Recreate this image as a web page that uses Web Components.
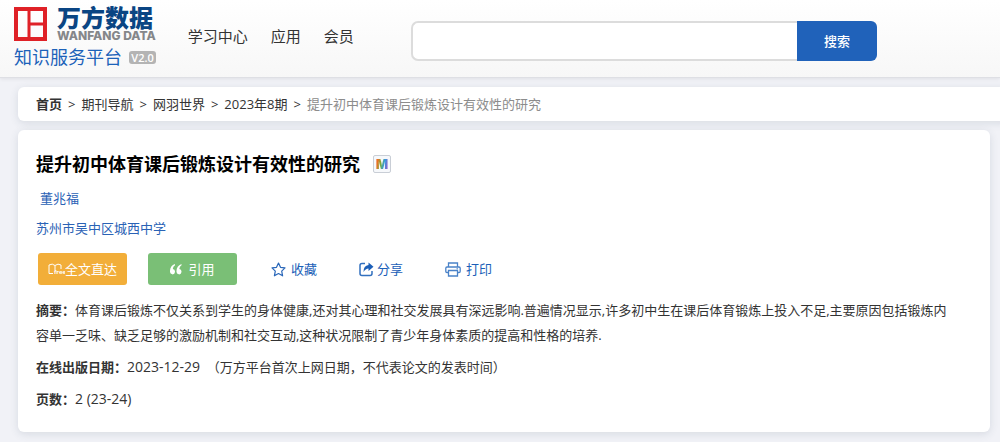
<!DOCTYPE html>
<html lang="zh-CN">
<head>
<meta charset="utf-8">
<meta name="viewport" content="width=device-width, initial-scale=1">
<title>提升初中体育课后锻炼设计有效性的研究</title>
<style>
  body {
    margin: 0;
    background: #f1f2f7;
    color: #333;
    font: 13px/20px "Open Sans", "Noto Sans CJK SC", sans-serif;
    overflow-x: hidden;
  }
  main {
    padding: 9px 10px 10px 18px;
  }
</style>
</head>
<body>
<site-header></site-header>
<main>
  <bread-crumb></bread-crumb>
  <paper-card>
    <span slot="title">提升初中体育课后锻炼设计有效性的研究</span>
    <span slot="author">董兆福</span>
    <span slot="org">苏州市吴中区城西中学</span>
    <info-row label="摘要：">体育课后锻炼不仅关系到学生的身体健康,还对其心理和社交发展具有深远影响.普遍情况显示,许多初中生在课后体育锻炼上投入不足,主要原因包括锻炼内容单一乏味、缺乏足够的激励机制和社交互动,这种状况限制了青少年身体素质的提高和性格的培养.</info-row>
    <info-row label="在线出版日期："><span slot="number">2023-12-29</span>&nbsp; （万方平台首次上网日期，不代表论文的发表时间）</info-row>
    <info-row label="页数："><span slot="number">2 (23-24)</span></info-row>
  </paper-card>
</main>

<script>
class SiteLogo extends HTMLElement {
  constructor() {
    super();
    this.attachShadow({ mode: "open" });
  }

  connectedCallback() {
    this.shadowRoot.innerHTML = `
      <style>
        :host { display: block; white-space: nowrap; }
        a { display: block; color: #1c62b9; text-decoration: none; }
        .top { display: flex; gap: 10px; align-items: center; height: 36px; }
        svg { display: block; flex: none; }
        .name {
          color: #0a4583;
          font-size: 24px;
          font-weight: 900;
          line-height: 24px;
        }
        .en {
          color: #85878a;
          font: 800 12px/12px Inter, sans-serif;
        }
        .sub {
          display: flex;
          justify-content: space-between;
          align-items: center;
          margin-top: 4px;
          font-size: 18px;
          line-height: 22px;
        }
        .version {
          padding: 0 2px;
          border-radius: 3px;
          background: #b4b4b4;
          color: #fff;
          font-size: 11px;
          font-weight: 600;
          line-height: 13px;
        }
      </style>
      <a href="#">
        <div class="top">
          <svg width="33" height="34" viewBox="0 0 33 34" fill="none" stroke="#df2127">
            <path d="M2 2h29v30H2z" stroke-width="4"/>
            <path d="M15 2v30M15 17h16" stroke-width="3"/>
          </svg>
          <div>
            <div class="name">万方数据</div>
            <div class="en">WANFANG DATA</div>
          </div>
        </div>
        <div class="sub">知识服务平台<span class="version">V2.0</span></div>
      </a>
    `;
  }
}

class SearchBox extends HTMLElement {
  constructor() {
    super();
    this.attachShadow({ mode: "open" });
  }

  connectedCallback() {
    this.shadowRoot.innerHTML = `
      <style>
        :host { display: block; }
        form { display: flex; height: 40px; }
        input {
          flex: 1;
          min-width: 0;
          box-sizing: border-box;
          padding: 0 12px;
          border: 2px solid #dcdcdc;
          border-right: 0;
          border-radius: 7px 0 0 7px;
          background: #fff;
          font: inherit;
          outline: none;
        }
        button {
          padding: 0 27px;
          border: 0;
          border-radius: 0 6px 6px 0;
          background: #2062ba;
          color: #fff;
          font: inherit;
          font-weight: 500;
          cursor: pointer;
        }
      </style>
      <form>
        <input type="text" aria-label="搜索">
        <button type="submit">搜索</button>
      </form>
    `;
    this.shadowRoot.querySelector("form").addEventListener("submit", (event) => event.preventDefault());
  }
}

class SiteHeader extends HTMLElement {
  constructor() {
    super();
    this.attachShadow({ mode: "open" });
  }

  connectedCallback() {
    this.shadowRoot.innerHTML = `
      <style>
        :host {
          display: flex;
          align-items: flex-start;
          padding: 6px 123px 7px 14px;
          border-bottom: 1px solid #dedfe4;
          background: linear-gradient(#fff, #f7f7f7);
          box-shadow: 0 1px 4px rgba(0, 0, 0, 0.08);
        }
        site-logo { flex: 0 0 141px; height: 64px; }
        nav { display: flex; gap: 23px; margin: 20px 0 0 32px; }
        nav a { color: #333; font-size: 15px; text-decoration: none; white-space: nowrap; }
        search-box { flex: 1; margin: 15px 0 0 57px; }
      </style>
      <site-logo></site-logo>
      <nav>
        <a href="#">学习中心</a>
        <a href="#">应用</a>
        <a href="#">会员</a>
      </nav>
      <search-box></search-box>
    `;
  }
}

class BreadCrumb extends HTMLElement {
  constructor() {
    super();
    this.attachShadow({ mode: "open" });
  }

  connectedCallback() {
    this.shadowRoot.innerHTML = `
      <style>
        /* bar runs out past the right edge of the window */
        :host {
          display: block;
          margin-right: -20px;
          padding: 7px 18px;
          border-radius: 6px;
          background: #fff;
          box-shadow: 0 2px 8px rgba(60, 80, 100, 0.14);
        }
        nav { display: flex; gap: 6px; white-space: nowrap; }
        a { color: #333; text-decoration: none; }
        .home { font-weight: 700; }
        .current { color: #8c8c8c; }
      </style>
      <nav>
        <a class="home" href="#">首页</a><span>&gt;</span>
        <a href="#">期刊导航</a><span>&gt;</span>
        <a href="#">网羽世界</a><span>&gt;</span>
        <a href="#">2023年8期</a><span>&gt;</span>
        <span class="current">提升初中体育课后锻炼设计有效性的研究</span>
      </nav>
    `;
  }
}

class ActionBar extends HTMLElement {
  constructor() {
    super();
    this.attachShadow({ mode: "open" });
  }

  connectedCallback() {
    this.shadowRoot.innerHTML = `
      <style>
        :host { display: flex; align-items: center; gap: 21px; padding-left: 2px; }
        button {
          display: flex;
          align-items: center;
          justify-content: center;
          padding: 0;
          border: 0;
          background: none;
          color: #1c5fb8;
          font: inherit;
          white-space: nowrap;
          cursor: pointer;
        }
        svg { display: block; }
        .full, .cite { width: 89px; height: 32px; border-radius: 3px; color: #fff; }
        .full { background: #f2ae39; }
        .cite { gap: 6px; background: #7abf76; }
        .links { display: flex; gap: 42px; margin-left: 13px; }
        .links button { gap: 5px; }
        .links .share { gap: 3px; }
      </style>
      <button class="full" type="button">
        <svg width="17" height="13" viewBox="0 0 17 13" fill="none" stroke="#fff">
          <path d="M5 10.500H1V2q3.500-2 6 .5Q10 0 13 2v4M7 2.500V7"/>
          <text x="6" y="11" fill="#fff" stroke="none" font-size="6" font-weight="700">free</text>
        </svg>
        全文直达
      </button>
      <button class="cite" type="button">
        <svg width="12" height="11" viewBox="0 0 12 11" fill="#fff">
          <path d="M5 0v1.200Q3 2.200 2.800 5A2.500 2.700 0 1 1 0 7.500Q-.2 2 5 0zM11.500 0v1.200Q9.500 2.200 9.300 5A2.500 2.700 0 1 1 6.500 7.500Q6.300 2 11.500 0z"/>
        </svg>
        引用
      </button>
      <div class="links">
        <button type="button">
          <svg width="15" height="15" viewBox="0 0 15 15" fill="none" stroke="#2a67b9" stroke-width="1.200" stroke-linejoin="round">
            <path d="M7.500 1l2 4.300 4.500.6-3.300 3.200.9 4.700-4.100-2.300-4.100 2.300.9-4.700L1 5.900l4.500-.6z"/>
          </svg>
          收藏
        </button>
        <button class="share" type="button">
          <svg width="15" height="15" viewBox="0 0 15 15" fill="none" stroke="#3270bf" stroke-width="1.500">
            <path d="M6 1.500H3Q1 1.500 1 3.500v8q0 2 2 2h8q2 0 2-2V9"/>
            <path d="M9.500 0.500L14.500 4.800 9.500 9V6.500Q6.500 6.500 4.500 10 4.500 3.500 9.500 3z" fill="#1c5fb8" stroke="none"/>
          </svg>
          分享
        </button>
        <button type="button">
          <svg width="16" height="15" viewBox="0 0 16 15" fill="none" stroke="#4a82c8" stroke-width="1.300">
            <path d="M3.500 5V1h9v4M3.500 10.500H2q-1.200 0-1.200-1.200V6.200Q.8 5 2 5h12q1.200 0 1.200 1.200v3.100q0 1.200-1.200 1.200h-1.500M3.500 8.500h9V14h-9z"/>
            <path d="M11.500 6.800h1.500" stroke-width="1"/>
          </svg>
          打印
        </button>
      </div>
    `;
  }
}

class InfoRow extends HTMLElement {
  constructor() {
    super();
    this.attachShadow({ mode: "open" });
  }

  connectedCallback() {
    const label = this.getAttribute("label");

    this.shadowRoot.innerHTML = `
      <style>
        :host { display: block; max-width: 920px; line-height: 25px; }
        p { margin: 0; }
        b { font-weight: 700; }
        ::slotted([slot="number"]) { font-size: 14px; line-height: 20px; }
      </style>
      <p><b>${label}</b><slot name="number"></slot><slot></slot></p>
    `;
  }
}

class PaperCard extends HTMLElement {
  constructor() {
    super();
    this.attachShadow({ mode: "open" });
  }

  connectedCallback() {
    this.shadowRoot.innerHTML = `
      <style>
        :host {
          display: block;
          margin-top: 9px;
          padding: 20px 18px;
          border-radius: 6px;
          background: #fff;
          box-shadow: 0 2px 8px rgba(60, 80, 100, 0.14);
        }
        header { display: flex; align-items: center; gap: 13px; }
        h1 { margin: 0; color: #000; font-size: 18px; line-height: 28px; font-weight: 700; }
        .mark {
          box-sizing: border-box;
          width: 18px;
          height: 18px;
          border: 1px solid #c9ced6;
          border-radius: 2px;
          background: #f6f8fb;
          text-align: center;
          font: 900 13px/16px Inter, sans-serif;
        }
        .mark span {
          background: linear-gradient(100deg, #ee6c23 15%, #7fae3a 40%, #2f9be0 65%, #b04fc4);
          background-clip: text;
          -webkit-background-clip: text;
          color: transparent;
        }
        a { color: #2a62b5; text-decoration: none; }
        .author { margin-top: 10px; padding-left: 4px; }
        .org { margin-top: 10px; }
        action-bar { margin-top: 15px; }
        .info { display: grid; gap: 7px; margin-top: 13px; }
      </style>
      <header>
        <h1><slot name="title"></slot></h1>
        <div class="mark"><span>M</span></div>
      </header>
      <div class="author"><a href="#"><slot name="author"></slot></a></div>
      <div class="org"><a href="#"><slot name="org"></slot></a></div>
      <action-bar></action-bar>
      <div class="info"><slot></slot></div>
    `;
  }
}

customElements.define("site-logo", SiteLogo);
customElements.define("search-box", SearchBox);
customElements.define("site-header", SiteHeader);
customElements.define("bread-crumb", BreadCrumb);
customElements.define("action-bar", ActionBar);
customElements.define("info-row", InfoRow);
customElements.define("paper-card", PaperCard);
</script>
</body>
</html>
